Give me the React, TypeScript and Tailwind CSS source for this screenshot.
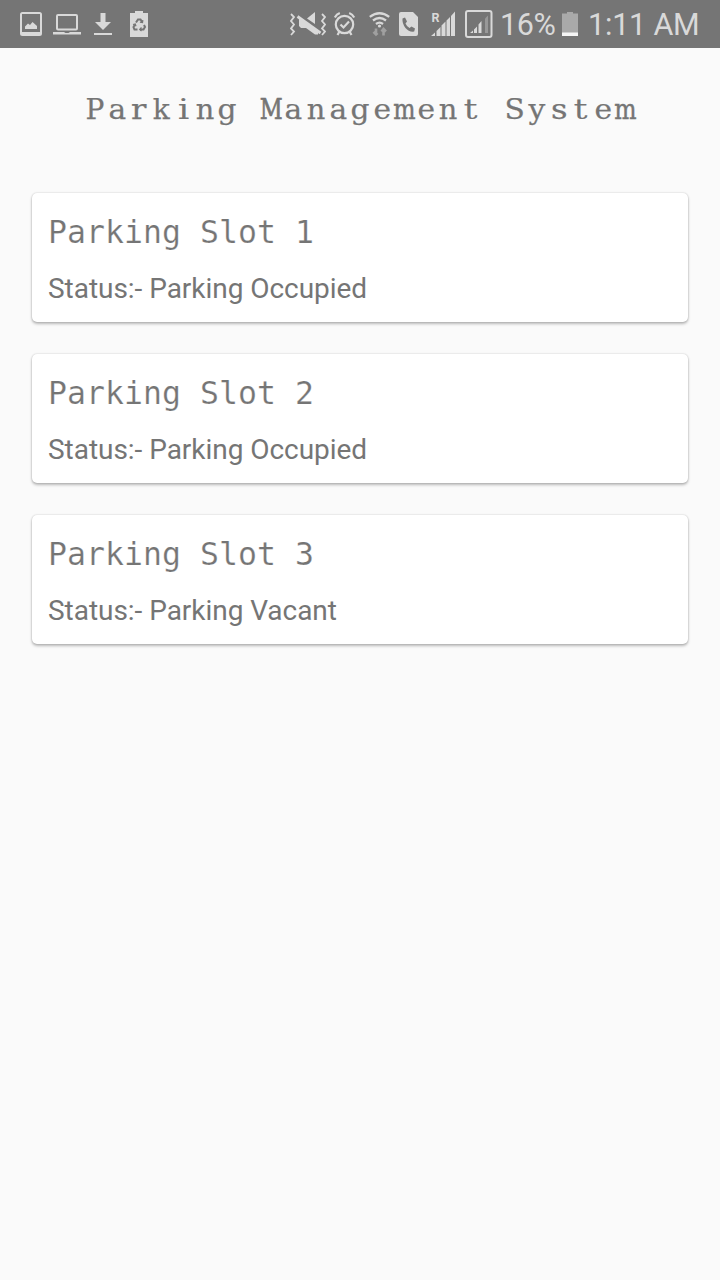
import React from 'react';

const slots = [
  { name: 'Parking Slot 1', status: 'Parking Occupied' },
  { name: 'Parking Slot 2', status: 'Parking Occupied' },
  { name: 'Parking Slot 3', status: 'Parking Vacant' },
];

// Horizontal scale that fits each proportional glyph to the monospaced heading grid.
const glyphFit: Record<string, string> = {
  M: 'scale-x-[0.8] [-webkit-text-stroke:0.7px_#757575]',
  m: 'scale-x-[0.84] [-webkit-text-stroke:0.5px_#757575]',
  i: 'scale-x-[1.3] [-webkit-text-stroke:0px]',
  r: 'scale-x-[1.15]',
  t: 'scale-x-[1.25] [-webkit-text-stroke:0px]',
  k: 'scale-x-[1]',
  n: 'scale-x-[1.03]',
  s: 'scale-x-[1.15]',
  P: 'scale-x-[1]',
};

function MonoHeading({ text }: { text: string }) {
  return (
    <h1 className="whitespace-pre text-center font-['DejaVu_Serif',serif] text-[28px] leading-[36px] text-[#757575] [-webkit-text-stroke:0.25px_#757575]">
      {text.split('').map((char, index) => (
        <span key={index} className="inline-flex w-[22.1px] justify-center">
          <span className={`inline-block ${glyphFit[char] ?? 'scale-x-[1.06]'}`}>{char}</span>
        </span>
      ))}
    </h1>
  );
}

function StatusBar() {
  return (
    <header className="flex h-12 shrink-0 items-center bg-[#757575] text-[#d9d9d9]">
      <svg className="ml-5 shrink-0" width="22" height="48" fill="currentColor">
        <path fillRule="evenodd" d="M2.500 12h17a2.500 2.500 0 0 1 2.500 2.500v19a2.500 2.500 0 0 1-2.500 2.500h-17A2.500 2.500 0 0 1 0 33.500v-19A2.500 2.500 0 0 1 2.500 12ZM2 14v18h18V14Z" />
        <path d="M5 29v-2.500l3-3 2 1.500 2.500-3 4.500 4V29Z" />
      </svg>
      <svg className="ml-[11px] shrink-0" width="28" height="48" fill="currentColor">
        <rect x="4" y="15" width="20" height="14.500" rx="1" fill="none" stroke="currentColor" strokeWidth="2" />
        <path d="M0 32h11l1.500 1h3L17 32h11v2.500H0Z" />
      </svg>
      <svg className="ml-[13px] shrink-0" width="18" height="48" fill="currentColor">
        <path d="M6.500 13h5v9H17l-8 8-8-8h5.500ZM0 33h18v2H0Z" />
      </svg>
      <svg className="ml-[18px] shrink-0" width="18" height="48" fill="currentColor">
        <path d="M5 11h8v2h5v24H0V13h5Z" />
        <g fill="none" stroke="#757575" strokeWidth="2">
          <path d="m6 22.500 2-3h2.500l2 3M14 25l1 2-1.500 2.500H10M7.500 29.500H4.500L3.500 27l1.500-2.500" />
          <path strokeWidth="1.200" d="m12.800 20-.3 2.500-2.600-.3M11.500 27.500l-1.800 2 1.800 1.500M3 24.500l2.200-.5.800 2.200" />
        </g>
      </svg>
      <svg className="ml-[142px] shrink-0" width="36" height="48" fill="currentColor">
        <path d="M17 18.500 25 12v12ZM9 18.500 28 31v3.500h-3L16 28h-5l-2-2Z" />
        <path d="M7.500 16.500 30.500 33" stroke="currentColor" strokeWidth="2.800" />
        <path d="m1 14 3 3-3 4 3 3.500-3 4 3 3-3 3.500M32 14l3 3-3 4 3 3.500-3 4 3 3-3 3.500" fill="none" stroke="currentColor" strokeWidth="1.800" />
      </svg>
      <svg className="ml-[8px] shrink-0" width="22" height="48" fill="none" stroke="currentColor" strokeWidth="2.200">
        <circle cx="10.500" cy="24.500" r="8.700" />
        <path d="m6.500 24.500 3 3 5.500-6M5.500 31.500 3.500 35M15.500 31.500l2 3.500M.8 17.500q1.700-3.300 5-4.500M20.200 17.500q-1.700-3.300-5-4.500" />
      </svg>
      <svg className="ml-[13px] shrink-0" width="22" height="48" fill="none" stroke="currentColor" strokeWidth="2.300">
        <path d="M.8 16.800q9.700-7.200 19.400 0M4 20.500q6.500-5 13 0M7 24q3.500-2.800 7 0" />
        <circle cx="10.500" cy="26" r="1.600" fill="currentColor" stroke="none" />
        <g stroke="#a0a0a0" strokeWidth="2.600">
          <path d="M7 28.500v6M4.500 31.800l2.500 2.700 1.500-1.500M14.500 35.500v-6M12.500 31.500l2-2.500 2.500 2.500" />
        </g>
      </svg>
      <svg className="ml-[8px] shrink-0" width="19" height="48">
        <path fill="currentColor" d="M2 12h12l5 5v17a2 2 0 0 1-2 2H2a2 2 0 0 1-2-2V14a2 2 0 0 1 2-2Z" />
        <path fill="#757575" d="M3.500 18.500 6 17.500l2 4-1.500 2q1.200 3 4 4.500l2-1.500 3.500 2-.8 3q-5.200.8-8.700-3.500-3.500-4.500-3-9.500Z" />
      </svg>
      <svg className="ml-[13px] shrink-0" width="26" height="48" fill="currentColor">
        <text x="0.500" y="22" fontFamily="Roboto, sans-serif" fontSize="12.500" fontWeight="700" textLength="7">R</text>
        <path d="m0 36 4-3.500V36ZM5.500 31l4-4v9h-4ZM10.500 25.500l4-4V36h-4ZM15.500 20.500l3.500-3.500v19h-3.500ZM20 16l4-4.500V36h-4Z" />
      </svg>
      <svg className="ml-[8px] shrink-0" width="28" height="48" fill="currentColor">
        <rect x="1" y="11" width="25.500" height="26" rx="2" fill="none" stroke="currentColor" strokeWidth="2" />
        <path d="m5 33 3-2.500V33ZM9 29.500l3-3V33H9ZM13.500 24.500l3-3.500v12h-3Z" />
        <path opacity=".35" d="m20 18.500 3-3V33h-3Z" />
      </svg>
      <span className="ml-[7px] mt-[2px] w-[58px] whitespace-nowrap font-[Roboto,sans-serif] text-[30.500px] leading-[48px] tracking-[-0.4px]">
        16%
      </span>
      <svg className="ml-[4px] shrink-0" width="16" height="48">
        <path fill="#a9a9a9" d="M5 12h6v1.500h5V36H0V13.500h5Z" />
        <path fill="#f5f5f5" d="M0 32.500h16V36H0Z" />
      </svg>
      <span className="ml-[10px] mt-[2px] whitespace-nowrap font-[Roboto,sans-serif] text-[30.500px] leading-[48px] tracking-[-0.2px]">1:11 AM</span>
    </header>
  );
}

export default function App() {
  return (
    <div className="flex h-[1280px] w-[720px] flex-col overflow-hidden bg-[#fafafa] text-[#757575]">
      <StatusBar />
      <main className="flex flex-col px-8 pt-[44px]">
        <MonoHeading text="Parking Management System" />
        <div className="mt-[65px] flex flex-col gap-8">
          {slots.map((slot) => (
            <section
              key={slot.name}
              className="flex h-[129px] flex-col rounded-[5px] bg-white px-4 pt-5 shadow-[0_2px_3px_rgba(0,0,0,0.26),0_0_2px_rgba(0,0,0,0.2)]"
            >
              <h2 className="whitespace-pre font-['DejaVu_Sans_Mono',monospace] text-[31.500px] leading-[38px] tracking-[0.03px] [-webkit-text-stroke:0.2px_white]">
                {slot.name}
              </h2>
              <p className="mt-[19px] font-[Roboto,sans-serif] text-[28px] leading-[38px] tracking-[-0.04px]">
                Status:- {slot.status}
              </p>
            </section>
          ))}
        </div>
      </main>
    </div>
  );
}
